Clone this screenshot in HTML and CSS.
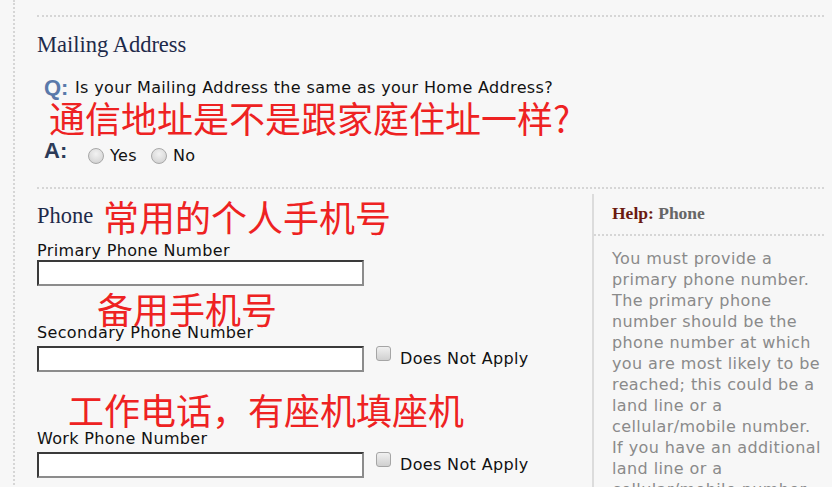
FILE: index.html
```html
<!DOCTYPE html>
<html lang="en">
<head>
<meta charset="utf-8">
<title>Mailing Address and Phone</title>
<link rel="stylesheet" href="styles.css">
</head>
<body>
<div class="page">
  <section class="section mailing">
    <h2 class="section-title">Mailing Address</h2>
    <div class="qa q-row"><span class="q-mark">Q:</span><span class="q-text">Is your Mailing Address the same as your Home Address?</span></div>
    <div class="qa a-row">
      <span class="a-mark">A:</span>
      <label class="radio"><span class="radio-dot"></span>Yes</label>
      <label class="radio"><span class="radio-dot"></span>No</label>
    </div>
    <div class="note note-mailing">通信地址是不是跟家庭住址一样?</div>
  </section>

  <section class="section phone">
    <div class="phone-main">
      <h2 class="section-title phone-title">Phone</h2>
      <div class="field field-primary">
        <div class="field-label">Primary Phone Number</div>
        <div class="field-row"><span class="text-input"></span></div>
      </div>
      <div class="field field-secondary">
        <div class="field-label">Secondary Phone Number</div>
        <div class="field-row"><span class="text-input"></span><label class="check"><span class="check-box"></span>Does Not Apply</label></div>
      </div>
      <div class="field field-work">
        <div class="field-label">Work Phone Number</div>
        <div class="field-row"><span class="text-input"></span><label class="check"><span class="check-box"></span>Does Not Apply</label></div>
      </div>
      <div class="note note-primary">常用的个人手机号</div>
      <div class="note note-secondary">备用手机号</div>
      <div class="note note-work">工作电话，有座机填座机</div>
    </div>
    <aside class="help">
      <div class="help-title"><span class="help-label">Help:</span> Phone</div>
      <p class="help-text">You must provide a primary phone number. The primary phone number should be the phone number at which you are most likely to be reached; this could be a land line or a cellular/mobile number. If you have an additional land line or a cellular/mobile number, you may enter it as well.</p>
    </aside>
  </section>
</div>
</body>
</html>
```

FILE: styles.css
```css
html, body {
  margin: 0;
  padding: 0;
  background: #f7f7f7;
  overflow: hidden;
  height: 487px;
}
body {
  font-family: "DejaVu Sans", Verdana, sans-serif;
  color: #111;
}
.page {
  margin-left: 13px;
  border-left: 2px dotted #d6d6d6;
  padding: 15px 8px 0 22px;
  min-height: 487px;
  box-sizing: border-box;
}
.section {
  position: relative;
  border-top: 2px dotted #d6d6d6;
}
.mailing {
  height: 170px;
}
.section-title {
  font-family: "Liberation Serif", "Times New Roman", serif;
  font-weight: normal;
  font-size: 22.5px;
  line-height: 24px;
  color: #1e2a4a;
  margin: 16px 0 0;
}
.qa {
  display: flex;
  align-items: center;
  font-size: 16px;
  letter-spacing: 0.35px;
  line-height: 20px;
}
.q-row {
  margin-top: 21px;
  padding-left: 7px;
}
.q-mark, .a-mark {
  font-family: "Liberation Sans", Arial, sans-serif;
  font-weight: bold;
  font-size: 22px;
  letter-spacing: 0;
  width: 31px;
}
.q-mark { color: #5a79aa; }
.a-mark { color: #2c3b58; margin-top: -11px; width: 44px; }
.a-row {
  margin-top: 48px;
  padding-left: 7px;
}
.radio {
  display: inline-flex;
  align-items: center;
  margin-right: 14px;
}
.radio-dot {
  width: 16px;
  height: 16px;
  border-radius: 50%;
  border: 1px solid #a8a8a8;
  background: radial-gradient(circle at 50% 35%, #f2f2f2 0%, #dcdcdc 60%, #c8c8c8 100%);
  margin-right: 6px;
  box-sizing: border-box;
}
.note {
  position: absolute;
  font-family: "Noto Sans CJK SC", sans-serif;
  color: #ee2222;
  font-size: 36px;
  line-height: 40px;
  white-space: nowrap;
}
.note-mailing { left: 12px; top: 80px; }
.phone {
  display: flex;
}
.phone-main {
  position: relative;
  flex: 1;
}
.phone-title {
  margin-top: 15px;
}
.field-label {
  font-size: 16px;
  letter-spacing: 0.35px;
  line-height: 18px;
}
.field-primary { margin-top: 14px; }
.field-secondary { margin-top: 38px; }
.field-work { margin-top: 58px; }
.field-secondary .field-row { margin-top: 4px; }
.field-work .field-row { margin-top: 4px; }
.field-row {
  display: flex;
  align-items: flex-start;
}
.text-input {
  display: block;
  width: 327px;
  height: 26px;
  box-sizing: border-box;
  background: #fff;
  border: 2px solid;
  border-color: #3a3a3a #8c8c8c #8c8c8c #3a3a3a;
}
.check {
  display: inline-flex;
  align-items: flex-start;
  font-size: 16px;
  letter-spacing: 0.35px;
  line-height: 26px;
  margin-left: 12px;
}
.check-box {
  width: 15px;
  height: 15px;
  border: 1px solid #a5a5a5;
  border-radius: 3px;
  box-sizing: border-box;
  background: linear-gradient(#f0f0f0, #d0d0d0);
  margin-right: 9px;
}
.note-primary { left: 66px; top: 7px; }
.note-secondary { left: 60px; top: 99px; }
.note-work { left: 31px; top: 200px; }
.help {
  width: 230px;
  margin-top: 5px;
  border-left: 2px solid #dcdcdc;
}
.help-title {
  font-family: "Liberation Serif", "Times New Roman", serif;
  font-weight: bold;
  font-size: 17.5px;
  line-height: 20px;
  color: #666;
  padding: 9px 18px 11px;
  border-bottom: 2px dotted #d6d6d6;
}
.help-label { color: #6b1a10; }
.help-text {
  margin: 0;
  padding: 12px 0 0 18px;
  font-size: 16px;
  letter-spacing: 0.4px;
  line-height: 21px;
  color: #8a8a8a;
}
```
